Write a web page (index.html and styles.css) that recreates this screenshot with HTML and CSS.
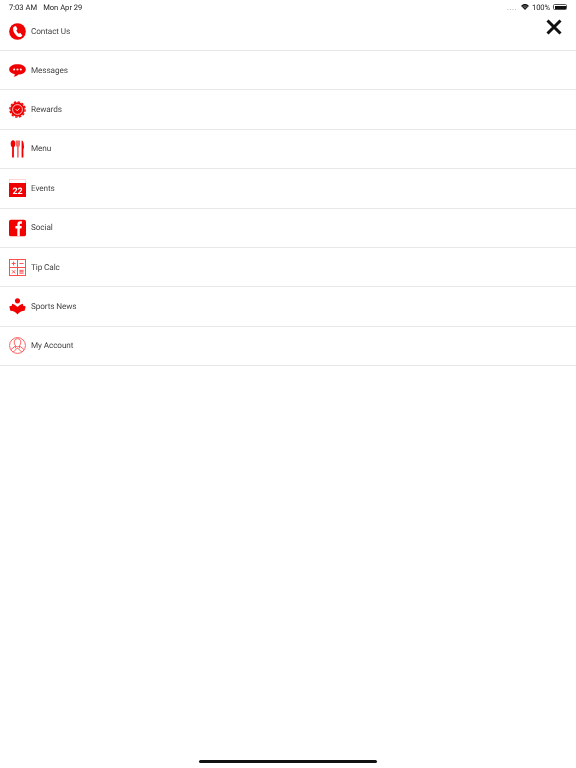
FILE: index.html
```html
<!DOCTYPE html>
<html lang="en">
<head>
    <meta charset="UTF-8">
    <meta name="viewport" content="width=device-width, initial-scale=1.0">
    <title>Menu</title>
    <link rel="stylesheet" href="styles.css">
</head>
<body>
    <div class="status-bar">
        <div class="status-left">
            <span>7:03 AM</span>
            <span>Mon Apr 29</span>
        </div>
        <div class="status-right">
            <span class="signal">....</span>
            <svg class="wifi" width="8" height="6" viewBox="0 0 18 14">
                <path d="M9 14 L0 4.500 C5 -1.500 13 -1.500 18 4.500 Z" fill="#111"/>
                <path d="M3 6.800 C6.500 3.600 11.500 3.600 15 6.800 M5.800 9.700 C7.800 8 10.200 8 12.200 9.700" fill="none" stroke="#fff" stroke-width="1"/>
            </svg>
            <span class="battery-percent">100%</span>
            <div class="battery"><div class="battery-fill"></div></div>
        </div>
    </div>

    <svg class="close-icon" width="16" height="16" viewBox="0 0 16 16">
        <path d="M1.500 1.500 L14.500 14.500 M14.500 1.500 L1.500 14.500" stroke="#111" stroke-width="3" fill="none"/>
    </svg>

    <ul class="menu-list">
        <li class="menu-item">
            <svg class="menu-icon" width="17" height="17" viewBox="0 0 18 18">
                <circle cx="9" cy="9" r="8.800" fill="#f00000"/>
                <path d="M5.800 3.600 L7.300 3.200 L9 6.600 L7.800 7.800 C8.100 9.200 9.200 10.600 10.500 11.300 L11.800 10.400 L14.200 13.300 L13.200 14.400 C11.500 15.500 9.500 14.800 7.800 13.200 C5.500 11 4 8 4.300 5.600 C4.400 4.700 5 4 5.800 3.600 Z" fill="#fff"/>
            </svg>
            <span class="menu-label">Contact Us</span>
        </li>
        <li class="menu-item">
            <svg class="menu-icon" width="17" height="17" viewBox="0 0 18 18">
                <path d="M9 2.500 C14 2.500 17.800 4.700 17.800 8 C17.800 11.300 14 13.300 9.800 13.300 C8.500 14.800 6.800 15.500 5 15.500 C5.800 14.700 6.200 13.800 6.200 12.900 C2.800 12.300 0.200 10.500 0.200 8 C0.200 4.700 4 2.500 9 2.500 Z" fill="#f00000"/>
                <circle cx="5.500" cy="8" r="1.100" fill="#fff"/>
                <circle cx="9" cy="8" r="1.100" fill="#fff"/>
                <circle cx="12.500" cy="8" r="1.100" fill="#fff"/>
            </svg>
            <span class="menu-label">Messages</span>
        </li>
        <li class="menu-item">
            <svg class="menu-icon" width="17" height="17" viewBox="0 0 18 18">
                <circle cx="9" cy="9" r="7.600" fill="#f00000"/>
                <circle cx="9" cy="9" r="8.100" fill="none" stroke="#f00000" stroke-width="1.400" stroke-dasharray="2.500 1.740"/>
                <circle cx="9" cy="9" r="5.200" fill="none" stroke="#fff" stroke-width="0.800"/>
                <path d="M6.800 8.400 L8.800 10.400 L11.200 7.600" fill="none" stroke="#fff" stroke-width="0.900"/>
            </svg>
            <span class="menu-label">Rewards</span>
        </li>
        <li class="menu-item">
            <svg class="menu-icon" width="17" height="18" viewBox="0 0 17 18">
                <ellipse cx="4" cy="3.800" rx="2.300" ry="3.500" fill="#f00000"/>
                <rect x="3.100" y="5" width="1.800" height="12.500" fill="#f00000"/>
                <path d="M6.800 0.500 H11 V4.500 C11 6 10.200 6.800 9.700 7 V17.500 H8.100 V7 C7.600 6.800 6.800 6 6.800 4.500 Z" fill="#f46a6a"/>
                <path d="M12.600 0.500 C14.300 0.500 15 4 15 8.500 H14.400 V17.500 H12.600 Z" fill="#f00000"/>
            </svg>
            <span class="menu-label">Menu</span>
        </li>
        <li class="menu-item">
            <svg class="menu-icon" width="17" height="18" viewBox="0 0 17 18">
                <rect x="0.300" y="0.300" width="16.400" height="17.400" fill="#fff" stroke="#fbb" stroke-width="0.600"/>
                <rect x="0" y="4" width="17" height="14" fill="#f00000"/>
                <text class="date-number" x="8.500" y="14.500" text-anchor="middle">22</text>
            </svg>
            <span class="menu-label">Events</span>
        </li>
        <li class="menu-item">
            <svg class="menu-icon" width="17" height="18" viewBox="0 0 18 18">
                <rect x="0" y="0.200" width="18" height="17.600" rx="2" fill="#f00000"/>
                <path d="M8.800 17.800 V9.500 H6.800 V7 H8.800 V5 C8.800 2.800 10 1.800 11.800 1.800 H13.600 V4.400 H12.500 C11.700 4.400 11.400 4.800 11.400 5.500 V7 H13.500 L13.200 9.500 H11.400 V17.800 Z" fill="#fff"/>
            </svg>
            <span class="menu-label">Social</span>
        </li>
        <li class="menu-item">
            <svg class="menu-icon" width="17" height="17" viewBox="0 0 18 18">
                <g fill="none" stroke="#f44" stroke-width="1">
                    <rect x="0.500" y="0.500" width="17" height="17"/>
                    <path d="M9 0.500 V17.500 M0.500 9 H17.500"/>
                    <path d="M2.800 4.800 H7 M4.900 2.700 V6.900 M11 4.800 H15.500"/>
                    <path d="M3.200 11.900 L6.600 15.300 M6.600 11.900 L3.200 15.300"/>
                    <path d="M11 12 H15.500 M11 13.500 H15.500 M11 15 H15.500"/>
                </g>
            </svg>
            <span class="menu-label">Tip Calc</span>
        </li>
        <li class="menu-item">
            <svg class="menu-icon" width="17" height="17" viewBox="0 0 18 18">
                <circle cx="9" cy="3" r="2.700" fill="#f00000"/>
                <path d="M9 9.500 C7.500 8 5.500 6.500 3.200 6 V8 L0.300 9 L1.500 13.500 C4.500 13.500 7.500 15 9 17.500 C10.500 15 13.500 13.500 16.500 13.500 L17.700 9 L14.800 8 V6 C12.500 6.500 10.500 8 9 9.500 Z" fill="#f00000"/>
            </svg>
            <span class="menu-label">Sports News</span>
        </li>
        <li class="menu-item">
            <svg class="menu-icon" width="17" height="17" viewBox="0 0 18 18">
                <g fill="none" stroke="#f44" stroke-width="0.900">
                    <circle cx="9" cy="9" r="8.400"/>
                    <path d="M5.500 5.500 C5.500 3.200 7 1.800 9 1.800 C11 1.800 12.500 3.200 12.500 5.500 C12.500 8 10.500 10.500 9 10.500 C7.500 10.500 5.500 8 5.500 5.500 Z"/>
                    <path d="M1.800 13.500 L6.800 9.500 L7 12 M16.200 13.500 L11.200 9.500 L11 12 M4.500 16 L9 11.500 L13.500 16"/>
                </g>
            </svg>
            <span class="menu-label">My Account</span>
        </li>
    </ul>

    <div class="home-indicator"></div>
</body>
</html>
```

FILE: styles.css
```css
html, body {
    height: 100%;
}

body {
    font-family: 'Roboto', 'Liberation Sans', Arial, sans-serif;
    margin: 0;
    background-color: white;
    color: #444;
    display: flex;
    flex-direction: column;
    position: relative;
    overflow: hidden;
    text-rendering: geometricPrecision;
}

.status-bar {
    display: flex;
    justify-content: space-between;
    align-items: center;
    height: 13px;
    padding: 1px 9px 0;
    box-sizing: border-box;
    font-size: 7.6px;
    color: #222;
    will-change: transform;
}

.status-left {
    display: flex;
    gap: 6px;
}

.status-right {
    display: flex;
    align-items: center;
    gap: 3px;
}

.signal {
    color: #999;
    letter-spacing: 0.5px;
    margin-right: 1px;
}

.battery-percent {
    letter-spacing: -0.1px;
}

.battery {
    width: 14px;
    height: 6px;
    padding: 0.5px;
    border: 0.5px solid #555;
    border-radius: 1.5px;
    box-sizing: border-box;
}

.battery-fill {
    height: 100%;
    background-color: #111;
}

.close-icon {
    position: absolute;
    top: 19px;
    right: 14px;
}

.menu-list {
    list-style: none;
    margin: 0;
    padding: 0;
    will-change: transform;
}

.menu-item {
    display: flex;
    align-items: center;
    gap: 5px;
    height: 38.4px;
    padding-left: 9px;
    border-bottom: 1px solid #e8e8e8;
    font-size: 8.2px;
    letter-spacing: -0.1px;
}

.menu-item:first-child {
    height: 37px;
}

.menu-icon {
    flex-shrink: 0;
}

.menu-label {
    margin-top: 1px;
}

.date-number {
    font-size: 9px;
    font-weight: bold;
    fill: white;
}

.home-indicator {
    position: absolute;
    left: 199px;
    bottom: 5px;
    width: 178px;
    height: 3px;
    border-radius: 2px;
    background-color: #111;
}
```
